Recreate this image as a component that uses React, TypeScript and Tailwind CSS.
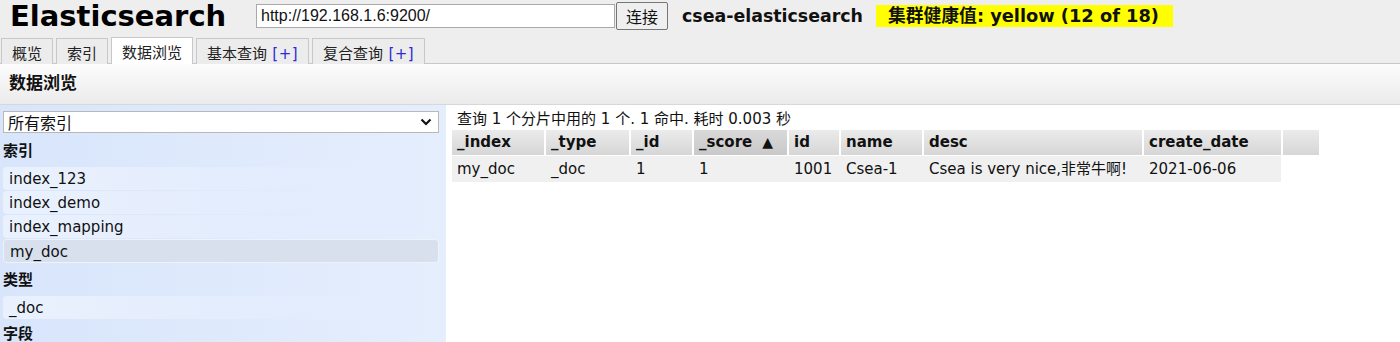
import React from "react";

const F = "font-['DejaVu_Sans','Noto_Sans_CJK_SC',sans-serif]";

const cols = [
  { k: "_index", w: "w-[92px]" },
  { k: "_type", w: "w-[83px]" },
  { k: "_id", w: "w-[61px]" },
  { k: "_score", w: "w-[93px]", sorted: true },
  { k: "id", w: "w-[50px]" },
  { k: "name", w: "w-[81px]" },
  { k: "desc", w: "w-[218px]" },
  { k: "create_date", w: "w-[137px]" },
];

const row = ["my_doc", "_doc", "1", "1", "1001", "Csea-1", "Csea is very nice,非常牛啊!", "2021-06-06"];

function Tab({ label, plus, active }: { label: string; plus?: boolean; active?: boolean }) {
  return (
    <div
      className={
        "h-[26px] px-[10px] pt-[6px] leading-[18px] text-[15px] border border-b-0 border-[#c8c8c8] " +
        (active ? "bg-white relative z-10 h-[27px]" : "bg-[#ececec]")
      }
    >
      <span className="text-[#222]">{label}</span>
      {plus && <span className="text-[#2b2bd6] tracking-[0.5px]"> [+]</span>}
    </div>
  );
}

export default function App() {
  return (
    <div className={`${F} w-[1400px] h-[342px] overflow-hidden bg-white text-[#111]`}>
      {/* top */}
      <div className="bg-[#eeeeee]">
        <div className="flex items-center h-[32px]">
          <div className="ml-[10px] w-[213px] text-[29px] font-bold leading-none text-black whitespace-nowrap">Elasticsearch</div>
          <div className="ml-[33px] w-[359px] h-[24px] bg-white border border-[#a9a9a9] flex items-center pl-[4px] font-['Liberation_Sans',sans-serif] text-[16px] text-[#111]">
            http://192.168.1.6:9200/
          </div>
          <div className="ml-[1px] w-[52px] h-[28px] bg-[#efefef] border border-[#767676] rounded-[2px] flex items-center justify-center text-[16px] font-['Noto_Sans_CJK_SC',sans-serif]">
            连接
          </div>
          <div className="ml-[14px] text-[17.4px] font-bold whitespace-nowrap">csea-elasticsearch</div>
          <div className="ml-[13px] h-[22px] bg-[#ffff00] pl-[12px] pr-[14px] flex items-center text-[17.8px] font-bold whitespace-nowrap">
            集群健康值: yellow (12 of 18)
          </div>
        </div>
        <div className="mt-[6px] flex items-end gap-[3px] pl-[1px] border-b border-[#c8c8c8] h-[26px]">
          <div className="flex items-end gap-[3px] -mb-px">
            <Tab label="概览" />
            <Tab label="索引" />
            <Tab label="数据浏览" active />
            <Tab label="基本查询" plus />
            <Tab label="复合查询" plus />
          </div>
        </div>
      </div>
      {/* header */}
      <div className="h-[41px] pl-[9px] flex items-center bg-gradient-to-b from-[#fcfcfc] to-[#ebebeb] border-b border-[#d8d8d8]">
        <span className="text-[17px] font-bold">数据浏览</span>
      </div>
      {/* main */}
      <div className="flex">
        <div className="w-[446px] h-[240px] bg-gradient-to-r from-[#d8e5fb] to-[#e5eefd] pl-[3px] pr-[7px] pt-[6px]">
          <div className="h-[22px] bg-white border border-[#b8b8b8] flex items-center justify-between pl-[4px] pr-[6px]">
            <span className="text-[16px] font-['Noto_Sans_CJK_SC',sans-serif] text-[#111]">所有索引</span>
            <svg width="12" height="8" viewBox="0 0 12 8">
              <path d="M1.5 1.5 L6 6 L10.5 1.5" fill="none" stroke="#111" strokeWidth="2.2" />
            </svg>
          </div>
          <div className="h-[34px] pt-[8px] leading-[20px] text-[15px] font-bold">索引</div>
          {["index_123", "index_demo", "index_mapping"].map((t) => (
            <div
              key={t}
              className="h-[23px] mb-[1px] rounded-[4px] pl-[6px] pt-[1px] flex items-center text-[15px] bg-gradient-to-r from-[#eaf1fe] via-[#e4edfd] to-transparent"
            >
              {t}
            </div>
          ))}
          <div className="h-[24px] rounded-[4px] pl-[6px] pt-[2px] flex items-center text-[15px] bg-[#d7e0ec] border border-[#eef3fb]">
            my_doc
          </div>
          <div className="h-[33px] pt-[7px] leading-[20px] text-[15px] font-bold">类型</div>
          <div className="h-[23px] rounded-[4px] pl-[6px] pt-[2px] flex items-center text-[15px] bg-gradient-to-r from-[#eaf1fe] via-[#e4edfd] to-transparent">
            _doc
          </div>
          <div className="h-[30px] pt-[5px] leading-[20px] text-[15px] font-bold">字段</div>
        </div>
        <div className="flex-1 pl-[6px] pt-[5px]">
          <div className="pl-[5px] leading-[18px] text-[15px] text-[#111] whitespace-nowrap">查询 1 个分片中用的 1 个. 1 命中. 耗时 0.003 秒</div>
          <div className="mt-[2px] flex gap-[2px] h-[25px]">
            {cols.map((c) => (
              <div
                key={c.k}
                className={
                  c.w +
                  " h-full pl-[5px] flex items-center text-[15px] font-bold whitespace-nowrap " +
                  (c.sorted
                    ? "bg-gradient-to-b from-[#d9d9d9] to-[#c9c9c9]"
                    : "bg-gradient-to-b from-[#ebebeb] to-[#d6d6d6]")
                }
              >
                {c.k}
                {c.sorted && <span className="ml-[10px] text-[14px]">▲</span>}
              </div>
            ))}
            <div className="w-[36px] h-full bg-gradient-to-b from-[#ebebeb] to-[#d6d6d6]" />
          </div>
          <div className="mt-[1px] flex gap-[2px] h-[26px] w-fit bg-[#f0f0f0]">
            {cols.map((c, i) => (
              <div key={c.k} className={c.w + " h-full pl-[5px] flex items-center text-[15px] whitespace-nowrap text-[#111]"}>
                {row[i]}
              </div>
            ))}
          </div>
        </div>
      </div>
    </div>
  );
}
